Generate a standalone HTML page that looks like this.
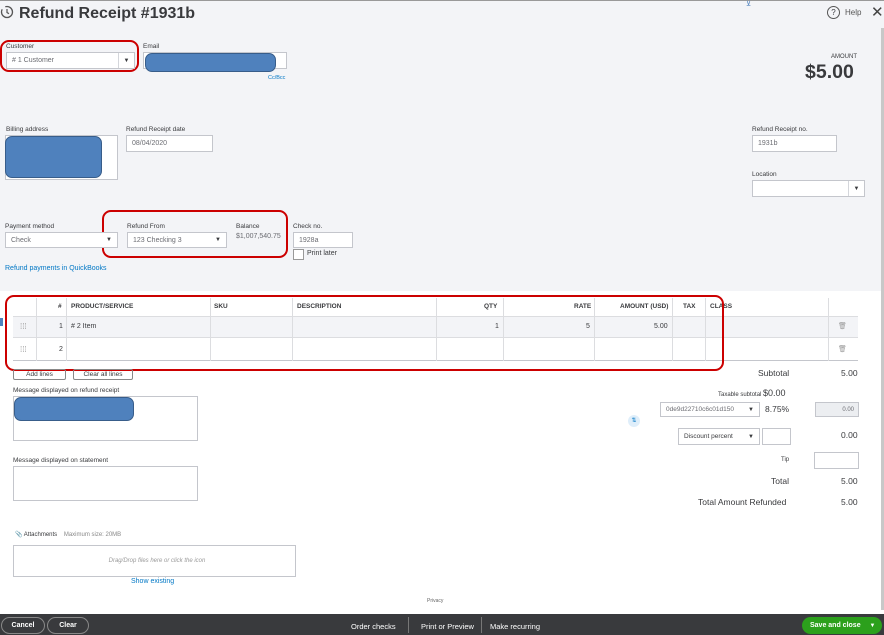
<!DOCTYPE html>
<html><head><meta charset="utf-8"><style>
*{margin:0;padding:0;box-sizing:border-box}
body{width:884px;height:635px;position:relative;overflow:hidden;font-family:"Liberation Sans",sans-serif;color:#393a3d;background:#fff}
.a{position:absolute}
.lbl{font-size:6.5px;color:#393a3d}
.in{position:absolute;background:#fff;border:1px solid #c4c6cc;font-size:7px;color:#6b6c72;padding-left:5px;display:flex;align-items:center}
.red{position:absolute;border:2px solid #c00;border-radius:9px}
.blue{position:absolute;background:#4f81bd;border:1.5px solid #385d8a;border-radius:7px}
.dd{position:absolute;right:0;top:0;bottom:0;width:16px;border-left:1px solid #d4d6db;font-size:6px;display:flex;align-items:center;justify-content:center;color:#393a3d}
.th{font-size:6.5px;font-weight:bold;color:#393a3d}
.vl{position:absolute;top:298px;height:63px;width:1px;background:#dcdde0}
.t{font-size:7px}
.btn{position:absolute;border:1px solid #888;border-radius:10px;color:#fff;font-size:7px;font-weight:bold;display:flex;align-items:center;justify-content:center}
</style></head><body>
<div class="a" style="left:0;top:0;width:884px;height:291px;background:#f3f4f7"></div>
<div class="a" style="left:0;top:0;width:884px;height:1px;background:#999"></div>
<div class="a" style="left:881px;top:28px;width:3px;height:582px;background:#c8c8c8"></div>
<svg class="a" style="left:0;top:4px" width="14" height="16" viewBox="0 0 14 16"><circle cx="7" cy="8" r="5.5" fill="none" stroke="#555" stroke-width="1.3" stroke-dasharray="20 4"/><path d="M7 5v3.5l2 1.2" stroke="#555" fill="none" stroke-width="1.2"/></svg>
<div class="a" style="left:19px;top:5px;font-size:16px;font-weight:bold;color:#393a3d">Refund Receipt #1931b</div>
<div class="a" style="left:827px;top:6px;width:13px;height:13px;border:1.2px solid #555;border-radius:50%;font-size:8px;text-align:center;line-height:11px">?</div>
<div class="a" style="left:845px;top:8px;font-size:8px;color:#555">Help</div>
<div class="a" style="left:871px;top:3px;font-size:15px;color:#444">✕</div>
<div class="a" style="left:746px;top:0;font-size:7px;color:#4f81bd">⊻</div>

<div class="red" style="left:0;top:40px;width:139px;height:32px"></div>
<div class="a lbl" style="left:6px;top:43px">Customer</div>
<div class="in" style="left:6px;top:52px;width:129px;height:17px">#&nbsp;1 Customer<div class="dd">▼</div></div>
<div class="a lbl" style="left:143px;top:43px">Email</div>
<div class="in" style="left:143px;top:52px;width:144px;height:17px"></div>
<div class="blue" style="left:145px;top:53px;width:131px;height:19px"></div>
<div class="a" style="left:268px;top:75px;font-size:5.5px;color:#0077c5">Cc/Bcc</div>
<div class="a" style="left:831px;top:54px;font-size:6px;color:#393a3d">AMOUNT</div>
<div class="a" style="left:805px;top:61px;font-size:19.5px;font-weight:bold;color:#393a3d">$5.00</div>

<div class="a lbl" style="left:6px;top:126px">Billing address</div>
<div class="in" style="left:5px;top:135px;width:113px;height:45px"></div>
<div class="blue" style="left:5px;top:136px;width:97px;height:42px"></div>
<div class="a lbl" style="left:126px;top:126px">Refund Receipt date</div>
<div class="in" style="left:126px;top:135px;width:87px;height:17px">08/04/2020</div>
<div class="a lbl" style="left:752px;top:126px">Refund Receipt no.</div>
<div class="in" style="left:752px;top:135px;width:85px;height:17px">1931b</div>
<div class="a lbl" style="left:752px;top:171px">Location</div>
<div class="in" style="left:752px;top:180px;width:113px;height:17px"><div class="dd">▼</div></div>

<div class="red" style="left:102px;top:210px;width:186px;height:48px"></div>
<div class="a lbl" style="left:5px;top:223px">Payment method</div>
<div class="in" style="left:5px;top:232px;width:113px;height:16px">Check<div class="dd" style="border:none">▼</div></div>
<div class="a lbl" style="left:127px;top:223px">Refund From</div>
<div class="in" style="left:127px;top:232px;width:100px;height:16px">123 Checking 3<div class="dd" style="border:none">▼</div></div>
<div class="a lbl" style="left:236px;top:223px">Balance</div>
<div class="a" style="left:236px;top:233px;font-size:7px;color:#6b6c72">$1,007,540.75</div>
<div class="a lbl" style="left:293px;top:223px">Check no.</div>
<div class="in" style="left:293px;top:232px;width:60px;height:16px">1928a</div>
<div class="a" style="left:293px;top:249px;width:11px;height:11px;border:1px solid #999;background:#fff"></div>
<div class="a lbl" style="left:307px;top:250px;font-size:7px">Print later</div>
<div class="a" style="left:5px;top:265px;font-size:7px;color:#0077c5">Refund payments in QuickBooks</div>

<div class="a" style="left:13px;top:298px;width:845px;height:63px;border-bottom:1.5px solid #c4c6cc"></div>
<div class="a" style="left:13px;top:316px;width:845px;height:22px;background:#f3f4f7;border-top:1px solid #dcdde0;border-bottom:1px solid #dcdde0"></div>
<div class="vl" style="left:36px"></div><div class="vl" style="left:66px"></div><div class="vl" style="left:210px"></div><div class="vl" style="left:292px"></div><div class="vl" style="left:436px"></div><div class="vl" style="left:503px"></div><div class="vl" style="left:594px"></div><div class="vl" style="left:672px"></div><div class="vl" style="left:705px"></div><div class="vl" style="left:828px"></div>
<div class="a th" style="left:58px;top:303px">#</div>
<div class="a th" style="left:71px;top:303px">PRODUCT/SERVICE</div>
<div class="a th" style="left:214px;top:303px">SKU</div>
<div class="a th" style="left:297px;top:303px">DESCRIPTION</div>
<div class="a th" style="left:484px;top:303px">QTY</div>
<div class="a th" style="left:574px;top:303px">RATE</div>
<div class="a th" style="left:620px;top:303px">AMOUNT (USD)</div>
<div class="a th" style="left:683px;top:303px">TAX</div>
<div class="a th" style="left:710px;top:303px">CLASS</div>
<div class="a t" style="left:20px;top:322px;color:#999;font-size:8px">⁞⁞⁞</div>
<div class="a t" style="left:59px;top:323px">1</div>
<div class="a t" style="left:71px;top:323px">#&nbsp;2 Item</div>
<div class="a t" style="left:495px;top:323px">1</div>
<div class="a t" style="left:586px;top:323px">5</div>
<div class="a t" style="left:654px;top:323px">5.00</div>
<div class="a t" style="left:838px;top:322px;color:#999">🗑</div>
<div class="a t" style="left:20px;top:345px;color:#999;font-size:8px">⁞⁞⁞</div>
<div class="a t" style="left:59px;top:346px">2</div>
<div class="a t" style="left:838px;top:345px;color:#999">🗑</div>
<div class="red" style="left:5px;top:295px;width:719px;height:76px"></div>
<div class="a" style="left:0;top:318px;width:3px;height:8px;background:#4f81bd"></div>

<div class="a" style="left:13px;top:369px;width:53px;height:11px;border:1px solid #888;border-radius:2px;font-size:6.5px;text-align:center;line-height:9px">Add lines</div>
<div class="a" style="left:73px;top:369px;width:60px;height:11px;border:1px solid #888;border-radius:2px;font-size:6.5px;text-align:center;line-height:9px">Clear all lines</div>

<div class="a lbl" style="left:13px;top:387px">Message displayed on refund receipt</div>
<div class="in" style="left:13px;top:396px;width:185px;height:45px"></div>
<div class="blue" style="left:14px;top:397px;width:120px;height:24px"></div>
<div class="a lbl" style="left:13px;top:457px">Message displayed on statement</div>
<div class="in" style="left:13px;top:466px;width:185px;height:35px"></div>

<div class="a" style="left:758px;top:368px;font-size:8.5px">Subtotal</div>
<div class="a" style="left:841px;top:368px;font-size:8.5px">5.00</div>
<div class="a" style="left:718px;top:388px;font-size:6px">Taxable subtotal <span style="font-size:9px">$0.00</span></div>
<div class="in" style="left:660px;top:402px;width:100px;height:15px;font-size:6.5px">0de9d22710c6c01d150<div class="dd" style="border:none">▼</div></div>
<div class="a" style="left:765px;top:404px;font-size:8.5px">8.75%</div>
<div class="in" style="left:815px;top:402px;width:44px;height:15px;background:#eceef1;justify-content:flex-end;padding-right:4px;font-size:6px">0.00</div>
<div class="a" style="left:628px;top:415px;width:12px;height:12px;border-radius:50%;background:#dfeefa;font-size:6px;color:#0077c5;text-align:center;line-height:12px">⇅</div>
<div class="in" style="left:678px;top:428px;width:82px;height:17px;font-size:6.5px;color:#393a3d">Discount percent<div class="dd" style="border:none">▼</div></div>
<div class="in" style="left:762px;top:428px;width:29px;height:17px"></div>
<div class="a" style="left:841px;top:430px;font-size:8.5px">0.00</div>
<div class="a" style="left:781px;top:457px;font-size:6px">Tip</div>
<div class="in" style="left:814px;top:452px;width:45px;height:17px"></div>
<div class="a" style="left:771px;top:476px;font-size:8.5px">Total</div>
<div class="a" style="left:841px;top:476px;font-size:8.5px">5.00</div>
<div class="a" style="left:698px;top:497px;font-size:8.5px">Total Amount Refunded</div>
<div class="a" style="left:841px;top:497px;font-size:8.5px">5.00</div>

<div class="a" style="left:15px;top:531px;font-size:6px">📎 Attachments <span style="color:#888;margin-left:5px">Maximum size: 20MB</span></div>
<div class="in" style="left:13px;top:545px;width:283px;height:32px;justify-content:center;font-style:italic;font-size:6px;color:#999">Drag/Drop files here or click the icon</div>
<div class="a" style="left:131px;top:578px;font-size:7px;color:#0077c5">Show existing</div>
<div class="a" style="left:427px;top:598px;font-size:5px;color:#666">Privacy</div>

<div class="a" style="left:0;top:614px;width:884px;height:21px;background:#393a3d"></div>
<div class="btn" style="left:1px;top:617px;width:44px;height:17px">Cancel</div>
<div class="btn" style="left:47px;top:617px;width:42px;height:17px">Clear</div>
<div class="a" style="left:351px;top:622px;font-size:7.5px;color:#fff">Order checks</div>
<div class="a" style="left:408px;top:617px;width:1px;height:16px;background:#777"></div>
<div class="a" style="left:421px;top:622px;font-size:7.5px;color:#fff">Print or Preview</div>
<div class="a" style="left:481px;top:617px;width:1px;height:16px;background:#777"></div>
<div class="a" style="left:490px;top:622px;font-size:7.5px;color:#fff">Make recurring</div>
<div class="a" style="left:802px;top:617px;width:80px;height:17px;background:#2ca01c;border-radius:9px;color:#fff;font-size:7px;font-weight:bold;line-height:17px;padding-left:8px">Save and close <span style="margin-left:7px;font-size:6px">▼</span></div>
</body></html>
